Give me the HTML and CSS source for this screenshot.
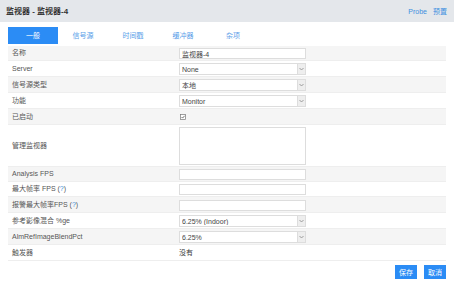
FILE: index.html
```html
<!DOCTYPE html>
<html lang="zh">
<head>
  <meta charset="UTF-8" />
  <title>监视器 - 监视器-4</title>
  <link rel="stylesheet" href="styles.css">
</head>
<body>

  <header class="page-header">
    <h1>监视器 - 监视器-4</h1>
    <nav class="header-links">
      <a href="#">Probe</a>
      <a href="#">预置</a>
    </nav>
  </header>

  <div class="content">
    <ul class="tabs">
      <li class="active">一般</li>
      <li>信号源</li>
      <li>时间戳</li>
      <li>缓冲器</li>
      <li>杂项</li>
    </ul>

    <table class="settings">
      <tbody>
        <tr>
          <td class="label">名称</td>
          <td><input type="text" class="field" value="监视器-4"></td>
        </tr>
        <tr class="tall">
          <td class="label">Server</td>
          <td>
            <div class="select-wrap">
              <select class="field"><option>None</option></select>
              <span class="arrow"><svg width="5" height="4" viewBox="0 0 5 4"><path d="M0.5 1 L2.5 3 L4.5 1" fill="none" stroke="#888" stroke-width="0.8"/></svg></span>
            </div>
          </td>
        </tr>
        <tr class="tall">
          <td class="label">信号源类型</td>
          <td>
            <div class="select-wrap">
              <select class="field"><option>本地</option></select>
              <span class="arrow"><svg width="5" height="4" viewBox="0 0 5 4"><path d="M0.5 1 L2.5 3 L4.5 1" fill="none" stroke="#888" stroke-width="0.8"/></svg></span>
            </div>
          </td>
        </tr>
        <tr class="tall">
          <td class="label">功能</td>
          <td>
            <div class="select-wrap">
              <select class="field"><option>Monitor</option></select>
              <span class="arrow"><svg width="5" height="4" viewBox="0 0 5 4"><path d="M0.5 1 L2.5 3 L4.5 1" fill="none" stroke="#888" stroke-width="0.8"/></svg></span>
            </div>
          </td>
        </tr>
        <tr class="tall">
          <td class="label">已启动</td>
          <td>
            <svg class="check" width="6" height="6" viewBox="0 0 6 6"><rect x="0.5" y="0.5" width="5" height="5" fill="#fff" stroke="#777" stroke-width="0.7"/><path d="M1.5 3 L2.6 4.1 L4.6 1.8" fill="none" stroke="#555" stroke-width="0.8"/></svg>
          </td>
        </tr>
        <tr>
          <td class="label">管理监视器</td>
          <td><textarea class="field area"></textarea></td>
        </tr>
        <tr>
          <td class="label">Analysis FPS</td>
          <td><input type="text" class="field"></td>
        </tr>
        <tr>
          <td class="label">最大帧率 FPS (<a href="#">?</a>)</td>
          <td><input type="text" class="field"></td>
        </tr>
        <tr class="tall">
          <td class="label">报警最大帧率FPS (<a href="#">?</a>)</td>
          <td><input type="text" class="field"></td>
        </tr>
        <tr class="tall">
          <td class="label">参考影像混合 %ge</td>
          <td>
            <div class="select-wrap">
              <select class="field"><option>6.25% (Indoor)</option></select>
              <span class="arrow"><svg width="5" height="4" viewBox="0 0 5 4"><path d="M0.5 1 L2.5 3 L4.5 1" fill="none" stroke="#888" stroke-width="0.8"/></svg></span>
            </div>
          </td>
        </tr>
        <tr class="tall">
          <td class="label">AlmRefImageBlendPct</td>
          <td>
            <div class="select-wrap">
              <select class="field"><option>6.25%</option></select>
              <span class="arrow"><svg width="5" height="4" viewBox="0 0 5 4"><path d="M0.5 1 L2.5 3 L4.5 1" fill="none" stroke="#888" stroke-width="0.8"/></svg></span>
            </div>
          </td>
        </tr>
        <tr class="tall">
          <td class="label">触发器</td>
          <td>没有</td>
        </tr>
      </tbody>
    </table>

    <div class="actions">
      <button class="btn">保存</button>
      <button class="btn">取消</button>
    </div>
  </div>

</body>
</html>
```

FILE: styles.css
```css
body {
  margin: 0;
  font-family: "Liberation Sans", "Noto Sans CJK SC", sans-serif;
  font-size: 7px;
  line-height: 1.2;
  color: #3a3a3a;
  background-color: #fff;
}

a {
  color: #3d8fe0;
  text-decoration: none;
}

.page-header {
  box-sizing: border-box;
  height: 22px;
  background-color: #e4e7eb;
  display: flex;
  align-items: center;
  justify-content: space-between;
  padding: 2px 7px 0 6px;
}

.page-header h1 {
  margin: 0;
  font-size: 8px;
  line-height: 10px;
  font-weight: bold;
  color: #333;
}

.header-links {
  display: flex;
  gap: 6px;
  font-size: 7px;
  line-height: 10px;
}

.content {
  padding: 0 8px;
}

.tabs {
  display: flex;
  list-style: none;
  margin: 5px 0 2px;
  padding: 0;
}

.tabs li {
  width: 50px;
  height: 17px;
  line-height: 17px;
  text-align: center;
  color: #5a9ee8;
}

.tabs li.active {
  background-color: #2b8cf5;
  color: #fff;
}

.settings {
  width: 100%;
  border-collapse: collapse;
}

.settings td {
  padding: 2px 4px 1px;
  border-bottom: 1px solid #eee;
  height: 11px;
  vertical-align: middle;
}

.settings tr.tall td {
  height: 12px;
}

.settings tr:nth-child(odd) {
  background-color: #f5f5f5;
}

.settings td.label {
  width: 159px;
  color: #555;
}

.field {
  box-sizing: border-box;
  width: 127px;
  height: 11px;
  margin: 0;
  padding: 0 2px;
  border: 1px solid #ddd;
  background-color: #fff;
  font-family: inherit;
  font-size: 7px;
  color: #444;
  display: block;
}

select.field {
  height: 12px;
  appearance: none;
  -webkit-appearance: none;
  border-radius: 0;
}

.select-wrap {
  position: relative;
  width: 127px;
}

.arrow {
  position: absolute;
  right: 1px;
  top: 1px;
  width: 7px;
  height: 10px;
  background-color: #eee;
  border-left: 1px solid #ddd;
  display: flex;
  align-items: center;
  justify-content: center;
}

.area {
  height: 38px;
  resize: none;
  overflow-y: scroll;
}

.area::-webkit-scrollbar {
  width: 8px;
  background-color: #eee;
}

.check {
  display: block;
  margin-left: 1px;
}

.actions {
  display: flex;
  justify-content: flex-end;
  gap: 7px;
  margin-top: 4px;
}

.btn {
  height: 14px;
  padding: 0 4px;
  border: none;
  background-color: #2b8cf5;
  color: #fff;
  font-family: inherit;
  font-size: 7px;
}
```
